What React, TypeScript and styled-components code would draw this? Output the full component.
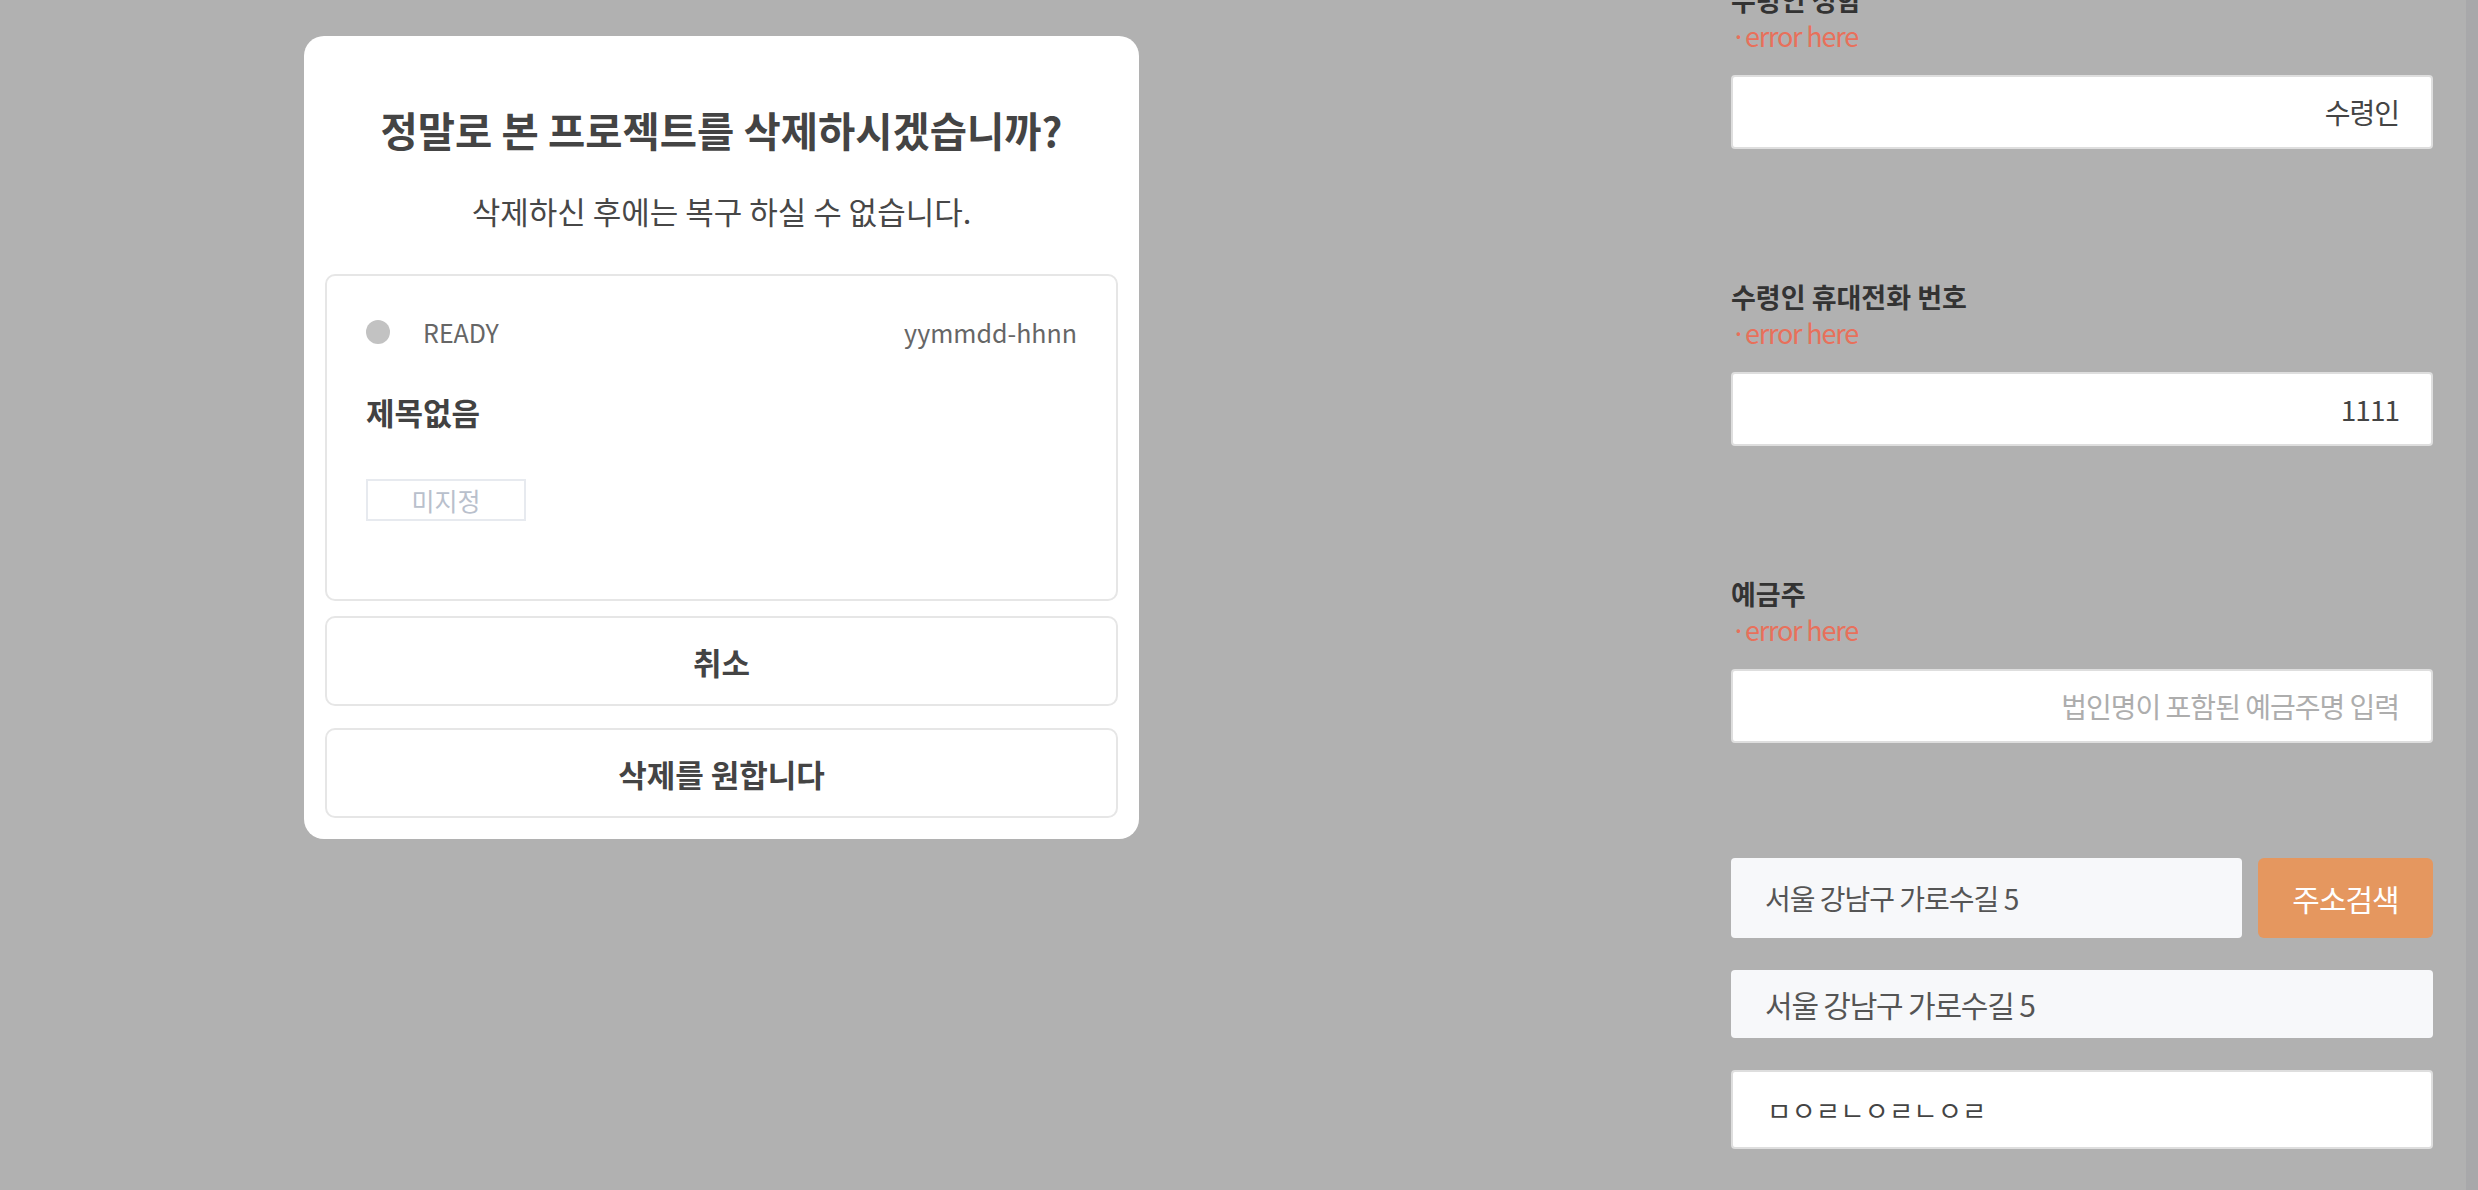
import React from 'react';
import styled, { createGlobalStyle } from 'styled-components';

const GlobalStyle = createGlobalStyle`
  html, body {
    margin: 0;
    padding: 0;
  }
  body {
    background: #b1b1b1;
    font-family: 'Noto Sans CJK KR', 'Noto Sans', sans-serif;
    overflow: hidden;
  }
  * {
    box-sizing: border-box;
  }
`;

const App: React.FC = () => {
  return (
    <>
      <GlobalStyle />
      <Page>
        <ModalArea>
          <Modal>
            <Title>정말로 본 프로젝트를 삭제하시겠습니까?</Title>
            <Subtitle>삭제하신 후에는 복구 하실 수 없습니다.</Subtitle>
            <ProjectCard>
              <CardHeader>
                <Status>
                  <StatusDot />
                  <StatusText>READY</StatusText>
                </Status>
                <StatusText>yymmdd-hhnn</StatusText>
              </CardHeader>
              <ProjectName>제목없음</ProjectName>
              <Badge>미지정</Badge>
            </ProjectCard>
            <ModalButton>취소</ModalButton>
            <ModalButton $gap={22}>삭제를 원합니다</ModalButton>
          </Modal>
        </ModalArea>

        <FormColumn>
          <Field $spacing={130}>
            <Label>수령인 성함</Label>
            <ErrorText>·error here</ErrorText>
            <TextInput readOnly value="수령인" />
          </Field>
          <Field $spacing={130}>
            <Label>수령인 휴대전화 번호</Label>
            <ErrorText>·error here</ErrorText>
            <TextInput readOnly value="1111" />
          </Field>
          <Field $spacing={115}>
            <Label>예금주</Label>
            <ErrorText>·error here</ErrorText>
            <TextInput readOnly placeholder="법인명이 포함된 예금주명 입력" />
          </Field>
          <AddressRow>
            <AddressInput readOnly value="서울 강남구 가로수길 5" />
            <SearchButton>주소검색</SearchButton>
          </AddressRow>
          <AddressDetail>서울 강남구 가로수길 5</AddressDetail>
          <DetailInput readOnly value="ㅁㅇㄹㄴㅇㄹㄴㅇㄹ" />
        </FormColumn>

        <ScrollTrack />
      </Page>
    </>
  );
};

export default App;

const Page = styled.div`
  display: flex;
  width: 2478px;
  height: 1190px;
  overflow: hidden;
`;

const ModalArea = styled.div`
  flex: 1;
  padding: 36px 0 0 304px;
`;

const Modal = styled.div`
  width: 835px;
  background: #fff;
  border-radius: 20px;
  padding: 70px 21px 21px;
  display: flex;
  flex-direction: column;
`;

const Title = styled.div`
  font-size: 40.5px;
  line-height: 48px;
  font-weight: 700;
  color: #444;
  text-align: center;
`;

const Subtitle = styled.div`
  margin-top: 37px;
  font-size: 31px;
  line-height: 40px;
  color: #474747;
  text-align: center;
`;

const ProjectCard = styled.div`
  margin-top: 43px;
  border: 2px solid #e6e6e6;
  border-radius: 10px;
  padding: 40px 39px 78px;
`;

const CardHeader = styled.div`
  display: flex;
  align-items: center;
  justify-content: space-between;
  height: 32px;
`;

const Status = styled.div`
  display: flex;
  align-items: center;
  gap: 33px;
`;

const StatusDot = styled.span`
  width: 24px;
  height: 24px;
  border-radius: 50%;
  background: #c2c2c2;
`;

const StatusText = styled.span`
  font-size: 25px;
  line-height: 32px;
  color: #666;
`;

const ProjectName = styled.div`
  margin-top: 44px;
  font-size: 31px;
  line-height: 40px;
  font-weight: 700;
  color: #424242;
`;

const Badge = styled.div`
  margin-top: 47px;
  width: 160px;
  height: 42px;
  border: 2px solid #e7eaef;
  display: flex;
  align-items: center;
  justify-content: center;
  font-size: 25px;
  color: #b9c0cc;
`;

const ModalButton = styled.button<{ $gap?: number }>`
  margin-top: ${(p) => p.$gap ?? 15}px;
  height: 90px;
  border: 2px solid #e6e6e6;
  border-radius: 10px;
  background: #fff;
  font-family: inherit;
  font-size: 31px;
  font-weight: 700;
  color: #444;
  padding: 0;
`;

const FormColumn = styled.div`
  width: 702px;
  margin-top: -18px;
  margin-right: 33px;
  display: flex;
  flex-direction: column;
`;

const Field = styled.div<{ $spacing: number }>`
  display: flex;
  flex-direction: column;
  margin-bottom: ${(p) => p.$spacing}px;
`;

const Label = styled.div`
  font-size: 27px;
  line-height: 36px;
  font-weight: 700;
  color: #333;
`;

const ErrorText = styled.div`
  margin-top: 0;
  font-size: 27px;
  line-height: 36px;
  color: #e8705b;
  letter-spacing: -1.2px;
`;

const TextInput = styled.input`
  margin-top: 21px;
  height: 74px;
  width: 100%;
  border: 2px solid #dedede;
  border-radius: 4px;
  background: #fff;
  padding: 0 32px;
  text-align: right;
  font-family: inherit;
  font-size: 28px;
  color: #444;
  letter-spacing: -1px;
  outline: none;

  &::placeholder {
    color: #adadad;
  }
`;

const AddressRow = styled.div`
  display: flex;
  gap: 16px;
  height: 80px;
`;

const AddressInput = styled.input`
  flex: 1;
  min-width: 0;
  border: none;
  border-radius: 4px;
  background: #f7f8fa;
  padding: 0 34px;
  font-family: inherit;
  font-size: 28px;
  color: #555;
  letter-spacing: -1px;
  outline: none;
`;

const SearchButton = styled.button`
  width: 175px;
  border: none;
  border-radius: 6px;
  background: #e5975f;
  color: #fff;
  font-family: inherit;
  font-size: 30px;
  letter-spacing: -1px;
  padding: 0;
`;

const AddressDetail = styled.div`
  margin-top: 32px;
  height: 68px;
  border-radius: 4px;
  background: #f7f8fa;
  padding: 0 34px;
  display: flex;
  align-items: center;
  font-size: 30px;
  color: #555;
  letter-spacing: -1.2px;
`;

const DetailInput = styled.input`
  margin-top: 32px;
  height: 79px;
  width: 100%;
  border: 2px solid #dedede;
  border-radius: 4px;
  background: #fff;
  padding: 0 34px;
  font-family: inherit;
  font-size: 26.5px;
  color: #444;
  outline: none;
`;

const ScrollTrack = styled.div`
  width: 12px;
  height: 100%;
  background: #a8a8aa;
`;
